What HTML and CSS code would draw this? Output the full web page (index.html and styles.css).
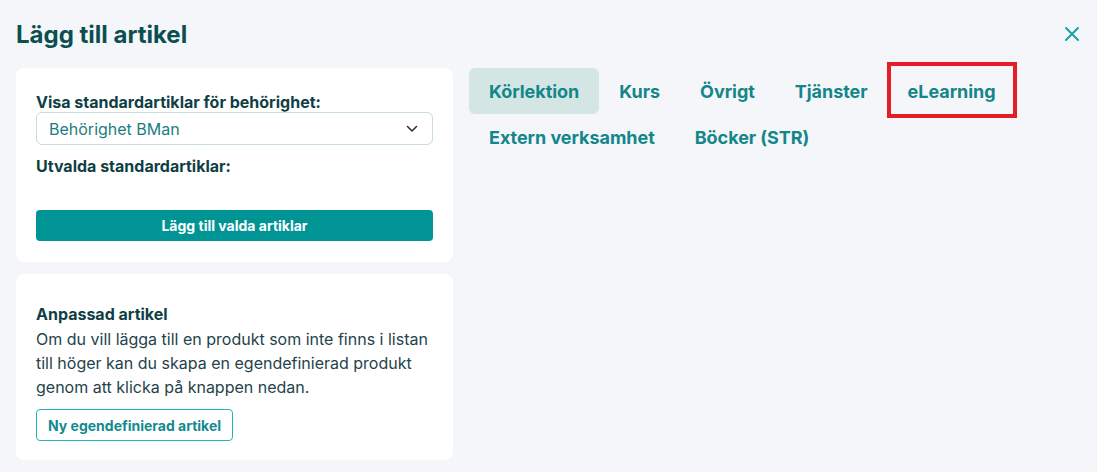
FILE: index.html
```html
<!DOCTYPE html>
<html lang="sv">
<head>
    <meta charset="UTF-8">
    <meta name="viewport" content="width=device-width, initial-scale=1.0">
    <title>Lägg till artikel</title>
    <link rel="stylesheet" href="styles.css">
</head>
<body>
    <div class="modal">
        <header class="modal-header">
            <h1>Lägg till artikel</h1>
            <button class="close" aria-label="Stäng">
                <svg width="16" height="16" viewBox="0 0 16 16"><path d="M2 2L14 14M14 2L2 14" stroke="currentColor" stroke-width="2" stroke-linecap="round"/></svg>
            </button>
        </header>

        <div class="modal-body">
            <div class="sidebar">
                <section class="card">
                    <label class="label" for="permission">Visa standardartiklar för behörighet:</label>
                    <div class="select">
                        <span>Behörighet BMan</span>
                        <svg width="12" height="8" viewBox="0 0 12 8"><path d="M1.5 1.5L6 6L10.5 1.5" fill="none" stroke="#333" stroke-width="1.6" stroke-linecap="round" stroke-linejoin="round"/></svg>
                    </div>
                    <div class="label selected">Utvalda standardartiklar:</div>
                    <button class="btn-primary">Lägg till valda artiklar</button>
                </section>

                <section class="card custom">
                    <div class="label">Anpassad artikel</div>
                    <p>Om du vill lägga till en produkt som inte finns i listan till höger kan du skapa en egendefinierad produkt genom att klicka på knappen nedan.</p>
                    <button class="btn-outline">Ny egendefinierad artikel</button>
                </section>
            </div>

            <nav class="tabs">
                <a class="tab active">Körlektion</a>
                <a class="tab">Kurs</a>
                <a class="tab">Övrigt</a>
                <a class="tab">Tjänster</a>
                <a class="tab marked">eLearning</a>
                <a class="tab">Extern verksamhet</a>
                <a class="tab">Böcker (STR)</a>
            </nav>
        </div>
    </div>
</body>
</html>
```

FILE: styles.css
```css
body {
    font-family: Inter, "Noto Sans", sans-serif;
    margin: 0;
    background-color: #f5f6fa;
    color: #0f4c4f;
}

.modal {
    padding: 16px 16px 12px 16px;
}

.modal-header {
    display: flex;
    justify-content: space-between;
    align-items: center;
    height: 36px;
    margin-bottom: 16px;
}

.modal-header h1 {
    margin: 0;
    font-size: 24px;
    font-weight: 700;
    color: #0b4f50;
}

.close {
    background: none;
    border: none;
    padding: 0;
    margin-right: 1px;
    color: #17a2a8;
    display: flex;
    cursor: pointer;
}

.modal-body {
    display: flex;
    gap: 16px;
}

.sidebar {
    width: 437px;
    display: flex;
    flex-direction: column;
    gap: 12px;
}

.card {
    background-color: #fff;
    border-radius: 8px;
    padding: 24px 20px 21px 20px;
    display: flex;
    flex-direction: column;
    align-items: flex-start;
}

.label {
    font-size: 16px;
    font-weight: 700;
    color: #0f3f45;
    line-height: 20px;
}

.select {
    box-sizing: border-box;
    width: 100%;
    height: 33px;
    border: 1px solid #c7dcdc;
    border-radius: 6px;
    display: flex;
    justify-content: space-between;
    align-items: center;
    padding: 0 14px 0 12px;
    font-size: 16px;
    color: #1b7d82;
}

.selected {
    margin-top: 11px;
}

.btn-primary {
    margin-top: 34px;
    width: 100%;
    height: 31px;
    border: none;
    border-radius: 4px;
    background-color: #009494;
    color: #fff;
    font-family: inherit;
    font-size: 14px;
    font-weight: 700;
    cursor: pointer;
}

.custom {
    padding-top: 30px;
    padding-bottom: 19px;
}

.custom p {
    margin: 3px 0 10px 0;
    font-size: 16px;
    line-height: 24px;
    color: #24434b;
}

.btn-outline {
    height: 32px;
    padding: 0 11px;
    border: 1px solid #22b4ba;
    border-radius: 4px;
    background-color: #fff;
    color: #138a8f;
    font-family: inherit;
    font-size: 14px;
    font-weight: 700;
    cursor: pointer;
}

.tabs {
    flex: 1;
    display: flex;
    flex-wrap: wrap;
    align-content: flex-start;
    padding-right: 60px;
}

.tab {
    position: relative;
    height: 46px;
    padding: 0 20px;
    display: flex;
    align-items: center;
    border-radius: 6px;
    font-size: 18px;
    font-weight: 700;
    letter-spacing: -0.04px;
    color: #13868a;
    cursor: pointer;
}

.tab.active {
    background-color: #d4e6e4;
}

.tab.marked::after {
    content: "";
    position: absolute;
    top: -6px;
    bottom: -4px;
    left: -1px;
    right: -1px;
    border: 4px solid #e81c24;
}
```
